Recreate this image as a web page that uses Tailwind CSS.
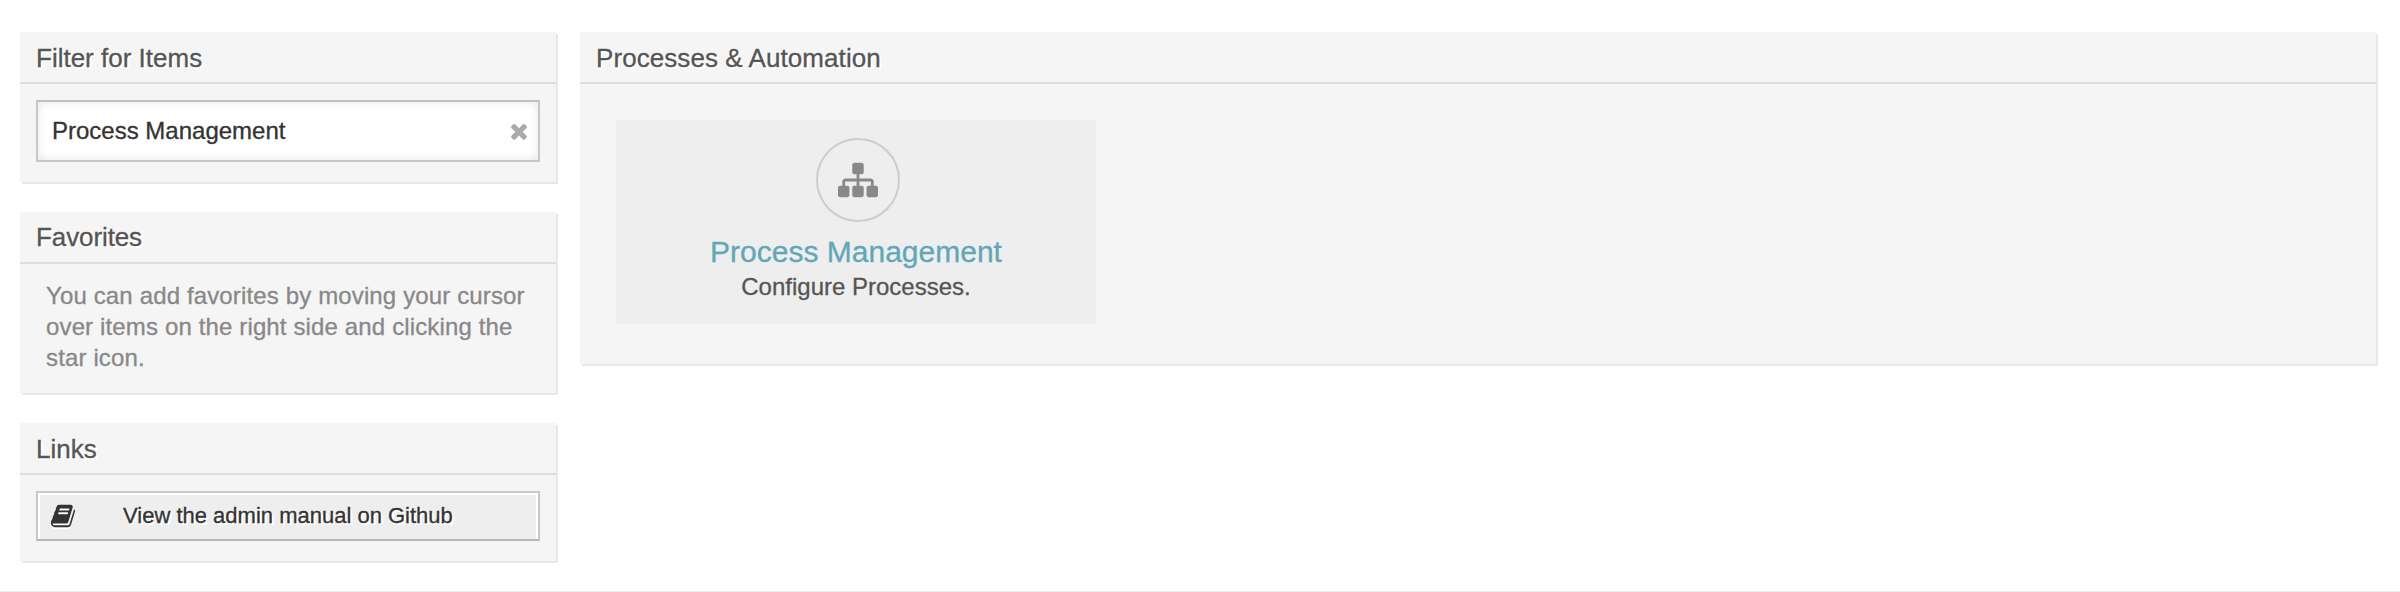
<!DOCTYPE html>
<html lang="en">
<head>
<meta charset="utf-8">
<title>Process Management</title>
<script src="https://cdn.jsdelivr.net/npm/@tailwindcss/browser@4"></script>
</head>
<body class="h-[592px] overflow-hidden bg-white font-['Liberation_Sans',Arial,sans-serif] text-[#555] [-webkit-text-stroke:0.3px]">
<div class="flex h-[592px] items-start gap-6 border-b border-[#eee] px-5 pt-8 pr-6">
  <aside class="flex w-[536px] shrink-0 flex-col gap-[30px]">
    <section class="h-[150px] bg-[#f5f5f5] shadow-[2px_2px_0_#e8e8e8]">
      <h2 class="h-[52px] border-b-2 border-[#ddd] px-4 text-[26px] leading-[52px] [text-shadow:2px_2px_0_#fff]">Filter for Items</h2>
      <div class="px-4 pt-4">
        <div class="flex h-[62px] items-center justify-between border-2 border-[#c8c8c8] border-t-[#c0c0c0] bg-white pr-[7px] pl-[14px] shadow-[inset_0_0_10px_#e6e6e6]">
          <span class="text-[24px] leading-[60px] text-[#333]">Process Management</span>
          <svg class="size-6 fill-[#aaa]" viewBox="0 0 1792 1792"><path d="M1490 1322q0 40-28 68l-136 136q-28 28-68 28t-68-28l-294-294-294 294q-28 28-68 28t-68-28l-136-136q-28-28-28-68t28-68l294-294-294-294q-28-28-28-68t28-68l136-136q28-28 68-28t68 28l294 294 294-294q28-28 68-28t68 28l136 136q28 28 28 68t-28 68l-294 294 294 294q28 28 28 68z"/></svg>
        </div>
      </div>
    </section>
    <section class="h-[181px] bg-[#f5f5f5] shadow-[2px_2px_0_#e8e8e8]">
      <h2 class="h-[52px] border-b-2 border-[#ddd] px-4 text-[26px] leading-[50px] tracking-[-0.1px] [text-shadow:2px_2px_0_#fff]">Favorites</h2>
      <p class="pt-4 pl-[26px] text-[24px] leading-[31px] tracking-[0.14px] whitespace-nowrap text-[#888]">You can add favorites by moving your cursor<br>over items on the right side and clicking the<br>star icon.</p>
    </section>
    <section class="h-[138px] bg-[#f5f5f5] shadow-[2px_2px_0_#e8e8e8]">
      <h2 class="h-[52px] border-b-2 border-[#ddd] px-4 text-[26px] leading-[52px] [text-shadow:2px_2px_0_#fff]">Links</h2>
      <div class="px-4 pt-4">
        <a class="flex h-[50px] items-center border-2 border-[#c8c8c8] border-b-[#b8b8b8] bg-[#eee] pl-3 text-[22px] leading-[46px] text-[#333] shadow-[inset_2px_2px_0_#fff,inset_-2px_0_0_#fff] [text-shadow:2px_2px_0_#fff]">
          <svg class="mr-[47px] size-[26px] fill-[#333] drop-shadow-[0_2px_0_#fff]" viewBox="0 0 1792 1792"><path d="M1703 478q40 57 18 129l-275 906q-19 64-76.5 107.5t-122.5 43.5h-923q-77 0-148.5-53.5t-99.5-131.5q-24-67-2-127 0-4 3-27t4-37q1-8-3-21.5t-3-19.5q2-11 8-21t16.5-23.5 16.5-23.5q23-38 45-91.5t30-91.5q3-10 .5-30t-.5-28q3-11 17-28t17-23q21-36 42-92t25-90q1-9-2.5-32t.5-28q4-13 22-30.5t22-22.5q19-26 42.5-84.5t27.5-96.5q1-8-3-25.5t-2-26.5q2-8 9-18t18-23 17-21q8-12 16.5-30.5t15-35 16-36 19.5-32 26.5-23.5 36-11.5 47.5 5.5l-1 3q38-9 51-9h761q74 0 114 56t18 130l-274 906q-36 119-71.5 153.5t-128.5 34.5h-869q-27 0-38 15-11 16-1 43 24 70 144 70h923q29 0 56-15.5t35-41.5l300-987q7-22 5-57 38 15 59 43zm-1064 2q-4 13 2 22.5t20 9.5h608q13 0 25.5-9.5t16.5-22.5l21-64q4-13-2-22.5t-20-9.5h-608q-13 0-25.5 9.5t-16.5 22.5zm-83 256q-4 13 2 22.5t20 9.5h608q13 0 25.5-9.5t16.5-22.5l21-64q4-13-2-22.5t-20-9.5h-608q-13 0-25.5 9.5t-16.5 22.5z"/></svg>
          <span>View the admin manual on Github</span>
        </a>
      </div>
    </section>
  </aside>
  <main class="h-[332px] flex-1 bg-[#f5f5f5] shadow-[2px_2px_0_#e8e8e8]">
    <h1 class="h-[52px] border-b-2 border-[#ddd] px-4 text-[26px] leading-[52px] tracking-[0.07px] [text-shadow:2px_2px_0_#fff]">Processes &amp; Automation</h1>
    <div class="px-9 pt-9">
      <a class="flex h-[204px] w-[480px] flex-col items-center bg-[#eee] pt-[18px] pl-1">
        <span class="flex size-[84px] items-center justify-center rounded-full border-2 border-[#ccc] pb-[1px]">
          <svg class="size-10 fill-[#888]" viewBox="0 0 1792 1792"><path d="M1792 1248v320q0 40-28 68t-68 28h-320q-40 0-68-28t-28-68v-320q0-40 28-68t68-28h96v-192h-512v192h96q40 0 68 28t28 68v320q0 40-28 68t-68 28h-320q-40 0-68-28t-28-68v-320q0-40 28-68t68-28h96v-192h-512v192h96q40 0 68 28t28 68v320q0 40-28 68t-68 28h-320q-40 0-68-28t-28-68v-320q0-40 28-68t68-28h96v-192q0-52 38-90t90-38h512v-192h-96q-40 0-68-28t-28-68v-320q0-40 28-68t68-28h320q40 0 68 28t28 68v320q0 40-28 68t-68 28h-96v192h512q52 0 90 38t38 90v192h96q40 0 68 28t28 68z"/></svg>
        </span>
        <span class="mt-3 mr-1 text-[30px] leading-9 text-[#62a7b8]">Process Management</span>
        <span class="mr-1 text-[24px] leading-[34px]">Configure Processes.</span>
      </a>
    </div>
  </main>
</div>
</body>
</html>
